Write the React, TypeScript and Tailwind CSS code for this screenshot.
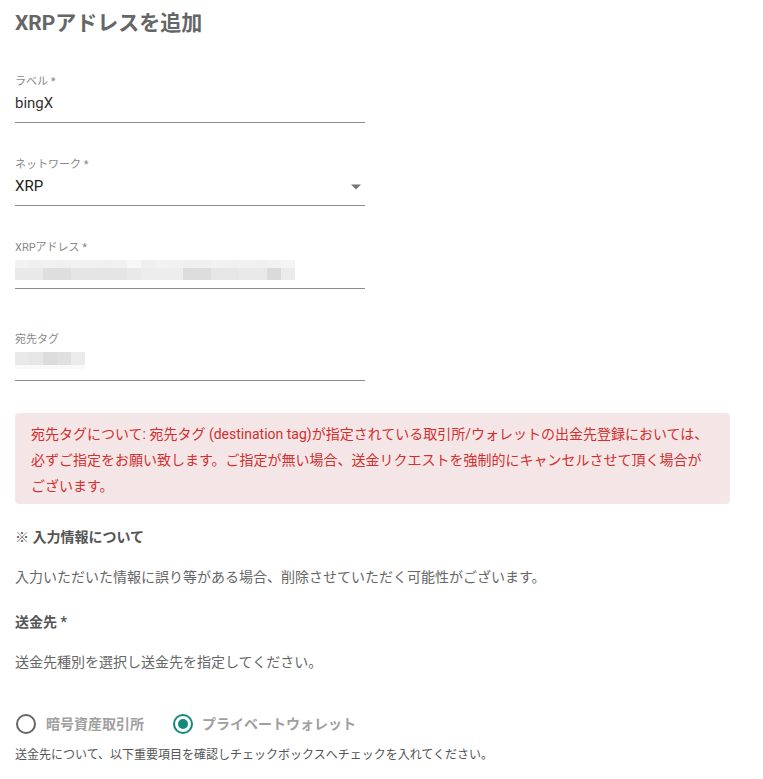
import React from "react";

const font = { fontFamily: '"Roboto", "Noto Sans CJK JP", sans-serif' };

const addrTop = [
  "bg-[#f2f2f2]", "bg-[#f0f0f0]", "bg-[#f1f1f1]", "bg-[#f0f0f0]", "bg-[#f2f2f2]",
  "bg-[#f1f1f1]", "bg-[#f0f0f0]", "bg-[#f1f1f1]", "bg-[#f7f7f7]", "bg-[#f0f0f0]",
  "bg-[#f2f2f2]", "bg-[#f1f1f1]", "bg-[#efefef]", "bg-[#f0f0f0]", "bg-[#f2f2f2]",
  "bg-[#f0f0f0]", "bg-[#f1f1f1]", "bg-[#f0f0f0]", "bg-[#f2f2f2]", "bg-[#f4f4f4]",
];
const addrBottom = [
  "bg-[#e9e9e9]", "bg-[#e9e9e9]", "bg-[#dedede]", "bg-[#dedede]", "bg-[#e5e5e5]",
  "bg-[#e5e5e5]", "bg-[#e5e5e5]", "bg-[#e5e5e5]", "bg-[#e9e9e9]", "bg-[#ededed]",
  "bg-[#ededed]", "bg-[#ededed]", "bg-[#dcdcdc]", "bg-[#dcdcdc]", "bg-[#e6e6e6]",
  "bg-[#e6e6e6]", "bg-[#e9e9e9]", "bg-[#e9e9e9]", "bg-[#dadada]", "bg-[#ebebeb]",
];
const tagRow = ["bg-[#e9e9e9]", "bg-[#e6e6e6]", "bg-[#dcdcdc]", "bg-[#e0e0e0]", "bg-[#ebebeb]"];

function Field({
  label,
  children,
  className = "",
}: {
  label: string;
  children: React.ReactNode;
  className?: string;
}) {
  return (
    <div className={`w-[350px] border-b border-[#8c8c8c] pb-[8px] ${className}`}>
      <div className="text-[11px] leading-[14px] text-[#888]">{label}</div>
      <div className="mt-[3px] h-[22px]">{children}</div>
    </div>
  );
}

export default function App() {
  return (
    <div className="min-h-screen bg-white px-[15px]" style={font}>
      <h1 className="pt-[9px] text-[21px] font-bold leading-[28px] text-[#666]">
        XRPアドレスを追加
      </h1>

      <Field label="ラベル *" className="mt-[38px]">
        <div className="text-[15px] leading-[22px] text-[#333]">bingX</div>
      </Field>

      <Field label="ネットワーク *" className="mt-[35px]">
        <div className="flex items-center justify-between pr-[4px]">
          <span className="text-[15px] leading-[22px] text-[#222]">XRP</span>
          <svg width="10" height="6" viewBox="0 0 10 5" className="mt-[1px]">
            <path d="M0 0 L10 0 L5 5 Z" fill="#757575" />
          </svg>
        </div>
      </Field>

      <Field label="XRPアドレス *" className="mt-[35px]">
        <div className="pt-[2px]">
          <div className="flex">
            {addrTop.map((c, i) => (
              <div key={i} className={`h-[8px] w-[14px] ${c}`} />
            ))}
          </div>
          <div className="flex">
            {addrBottom.map((c, i) => (
              <div key={i} className={`h-[12px] w-[14px] ${c}`} />
            ))}
          </div>
        </div>
      </Field>

      <Field label="宛先タグ" className="mt-[44px]">
        <div className="pt-[2px]">
          <div className="flex">
            {tagRow.map((c, i) => (
              <div key={i} className={`h-[13px] w-[14px] ${c}`} />
            ))}
          </div>
          <div className="h-[4px] w-[70px] bg-[#f9f9f9]" />
        </div>
      </Field>

      <div className="mt-[32px] w-[715px] rounded-[4px] bg-[#f4e6e6] px-[16px] pb-[5px] pt-[8px] text-[14px] leading-[26px] text-[#d32f2f]">
        宛先タグについて: 宛先タグ (destination tag)が指定されている取引所/ウォレットの出金先登録においては、必ずご指定をお願い致します。ご指定が無い場合、送金リクエストを強制的にキャンセルさせて頂く場合がございます。
      </div>

      <div className="mt-[23px] text-[14px] font-bold leading-[20px] text-[#555]">
        <span className="font-normal">※</span> 入力情報について
      </div>
      <div className="mt-[20px] text-[14px] leading-[20px] text-[#666]">
        入力いただいた情報に誤り等がある場合、削除させていただく可能性がございます。
      </div>
      <div className="mt-[25px] text-[14px] font-bold leading-[20px] text-[#555]">
        送金先 *
      </div>
      <div className="mt-[20px] text-[14px] leading-[20px] text-[#666]">
        送金先種別を選択し送金先を指定してください。
      </div>

      <div className="mt-[40px] flex h-[24px] items-center">
        <div className="flex items-center">
          <div className="ml-[1px] h-[20px] w-[20px] rounded-full border-2 border-[#666]" />
          <span className="ml-[10px] text-[14px] font-bold text-[#a0a0a0]">暗号資産取引所</span>
        </div>
        <div className="ml-[29px] flex items-center">
          <div className="flex h-[20px] w-[20px] items-center justify-center rounded-full border-2 border-[#148a7b]">
            <div className="h-[10px] w-[10px] rounded-full bg-[#148a7b]" />
          </div>
          <span className="ml-[9px] text-[14px] font-bold text-[#a0a0a0]">プライベートウォレット</span>
        </div>
      </div>

      <div className="mt-[11px] text-[12px] leading-[16px] text-[#555]">
        送金先について、以下重要項目を確認しチェックボックスへチェックを入れてください。
      </div>
    </div>
  );
}
